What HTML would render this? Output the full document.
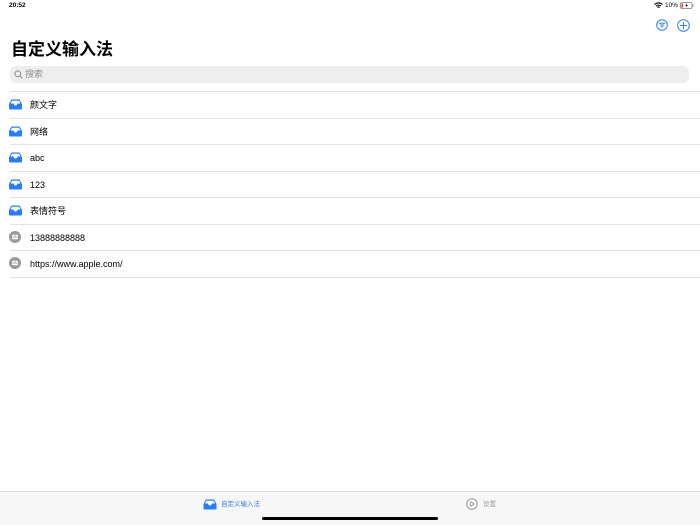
<!DOCTYPE html>
<html><head><meta charset="utf-8"><style>
*{margin:0;padding:0;box-sizing:border-box}
body{width:700px;height:525px;background:#fff;font-family:"Liberation Sans","Noto Sans CJK SC",sans-serif;position:relative;overflow:hidden;color:#000}
.abs{position:absolute}
.row{position:absolute;left:0;width:700px;height:26.6px}
.row .t{position:absolute;left:30px;top:1px;line-height:26px;font-size:9px}
.row .ic{position:absolute;left:9px;top:8px}
.sep{position:absolute;left:10px;right:0;height:1px;background:#e3e3e5}
</style></head><body>
<div class="abs" style="left:9px;top:2px;font-size:6.5px;font-weight:bold">20:52</div>
<div class="abs" style="left:654px;top:2px;font-size:6.5px;display:flex;align-items:center;gap:2px">
<svg width="9" height="7" viewBox="0 0 9 7"><path d="M0.5 2.5A6 6 0 0 1 8.5 2.5M2 4A4 4 0 0 1 7 4M3.3 5.4A2 2 0 0 1 5.7 5.4" stroke="#000" stroke-width="1.1" fill="none"/></svg>
<span>10%</span>
<svg width="14" height="7" viewBox="0 0 14 7"><rect x="0.5" y="0.5" width="11.5" height="6" rx="1.5" fill="none" stroke="#999"/><rect x="1.5" y="1.5" width="1.5" height="4" fill="#e33"/><rect x="12.5" y="2.3" width="1" height="2.5" fill="#999"/><path d="M7 1L5 3.8H6.6L5.8 6L8 3H6.4Z" fill="#000"/></svg>
</div>
<svg class="abs" style="left:656px;top:19px" width="12" height="12" viewBox="0 0 12 12"><circle cx="6" cy="6" r="5.3" fill="none" stroke="#2a7ef5" stroke-width="1"/><path d="M3.2 4.3H8.8M4.2 6H7.8M5.2 7.7H6.8" stroke="#2a7ef5" stroke-width="1" stroke-linecap="round"/></svg>
<svg class="abs" style="left:677px;top:19px" width="13" height="13" viewBox="0 0 13 13"><circle cx="6.5" cy="6.5" r="5.8" fill="none" stroke="#2a7ef5" stroke-width="1"/><path d="M6.5 3.5V9.5M3.5 6.5H9.5" stroke="#2a7ef5" stroke-width="1" stroke-linecap="round"/></svg>
<div class="abs" style="left:11px;top:39px;font-size:17px;font-weight:bold;line-height:22px">自定义输入法</div>
<div class="abs" style="left:10px;top:66px;width:679px;height:17px;background:#eeeeef;border-radius:6px"></div>
<svg class="abs" style="left:14px;top:70px" width="9" height="9" viewBox="0 0 9 9"><circle cx="3.8" cy="3.8" r="2.9" fill="none" stroke="#8e8e93" stroke-width="1"/><path d="M6 6L8.3 8.3" stroke="#8e8e93" stroke-width="1.1"/></svg>
<div class="abs" style="left:25px;top:68px;font-size:9px;color:#8e8e93;line-height:12px">搜索</div>
<div class="sep" style="top:91px"></div>

<div class="row" style="top:91px"><svg class="ic" width="13" height="11" viewBox="0 0 13 11"><path d="M2.5 0.5H10.5L13 5V9.5Q13 10.5 12 10.5H1Q0 10.5 0 9.5V5Z" fill="#2a7ef5"/><path d="M1.5 4.5H4.5Q5 6.5 6.5 6.5Q8 6.5 8.5 4.5H11.5L10 1.8H3Z" fill="#fff"/></svg><div class="t">颜文字</div></div>
<div class="sep" style="top:118px"></div>
<div class="row" style="top:118px"><svg class="ic" width="13" height="11" viewBox="0 0 13 11"><path d="M2.5 0.5H10.5L13 5V9.5Q13 10.5 12 10.5H1Q0 10.5 0 9.5V5Z" fill="#2a7ef5"/><path d="M1.5 4.5H4.5Q5 6.5 6.5 6.5Q8 6.5 8.5 4.5H11.5L10 1.8H3Z" fill="#fff"/></svg><div class="t">网络</div></div>
<div class="sep" style="top:144px"></div>
<div class="row" style="top:144px"><svg class="ic" width="13" height="11" viewBox="0 0 13 11"><path d="M2.5 0.5H10.5L13 5V9.5Q13 10.5 12 10.5H1Q0 10.5 0 9.5V5Z" fill="#2a7ef5"/><path d="M1.5 4.5H4.5Q5 6.5 6.5 6.5Q8 6.5 8.5 4.5H11.5L10 1.8H3Z" fill="#fff"/></svg><div class="t">abc</div></div>
<div class="sep" style="top:171px"></div>
<div class="row" style="top:171px"><svg class="ic" width="13" height="11" viewBox="0 0 13 11"><path d="M2.5 0.5H10.5L13 5V9.5Q13 10.5 12 10.5H1Q0 10.5 0 9.5V5Z" fill="#2a7ef5"/><path d="M1.5 4.5H4.5Q5 6.5 6.5 6.5Q8 6.5 8.5 4.5H11.5L10 1.8H3Z" fill="#fff"/></svg><div class="t">123</div></div>
<div class="sep" style="top:197px"></div>
<div class="row" style="top:197px"><svg class="ic" width="13" height="11" viewBox="0 0 13 11"><path d="M2.5 0.5H10.5L13 5V9.5Q13 10.5 12 10.5H1Q0 10.5 0 9.5V5Z" fill="#2a7ef5"/><path d="M1.5 4.5H4.5Q5 6.5 6.5 6.5Q8 6.5 8.5 4.5H11.5L10 1.8H3Z" fill="#fff"/></svg><div class="t">表情符号</div></div>
<div class="sep" style="top:224px"></div>
<div class="row" style="top:224px"><svg class="ic" style="top:7px" width="12" height="12" viewBox="0 0 12 12"><circle cx="6" cy="6" r="6" fill="#9a9a9e"/><rect x="3" y="3.8" width="6" height="4.4" rx="0.8" fill="#fff"/><path d="M3 6H9M6 3.8V6" stroke="#9a9a9e" stroke-width="0.7"/></svg><div class="t">13888888888</div></div>
<div class="sep" style="top:250px"></div>
<div class="row" style="top:250px"><svg class="ic" style="top:7px" width="12" height="12" viewBox="0 0 12 12"><circle cx="6" cy="6" r="6" fill="#9a9a9e"/><rect x="3" y="3.8" width="6" height="4.4" rx="0.8" fill="#fff"/><path d="M3 6H9M6 3.8V6" stroke="#9a9a9e" stroke-width="0.7"/></svg><div class="t">https://www.apple.com/</div></div>
<div class="sep" style="top:277px"></div>

<div class="abs" style="left:0;top:491px;width:700px;height:34px;background:#f7f7f7;border-top:1px solid #dcdcde"></div>
<svg class="abs" style="left:203px;top:499px" width="14" height="11" viewBox="0 0 13 11"><path d="M2.5 0.5H10.5L13 5V9.5Q13 10.5 12 10.5H1Q0 10.5 0 9.5V5Z" fill="#2a7ef5"/><path d="M1.5 4.5H4.5Q5 6.5 6.5 6.5Q8 6.5 8.5 4.5H11.5L10 1.8H3Z" fill="#fff"/></svg>
<div class="abs" style="left:221px;top:500px;font-size:6.5px;color:#2a7ef5;line-height:9px">自定义输入法</div>
<svg class="abs" style="left:466px;top:498px" width="12" height="12" viewBox="0 0 12 12"><circle cx="6" cy="6" r="5.3" fill="none" stroke="#9a9a9e" stroke-width="1"/><path d="M4.6 3.6L8.2 6L4.6 8.4Z" fill="none" stroke="#9a9a9e" stroke-width="0.9" stroke-linejoin="round"/></svg>
<div class="abs" style="left:483px;top:500px;font-size:6.5px;color:#9a9a9e;line-height:9px">设置</div>
<div class="abs" style="left:262px;top:517px;width:176px;height:3px;border-radius:2px;background:#000"></div>
</body></html>
